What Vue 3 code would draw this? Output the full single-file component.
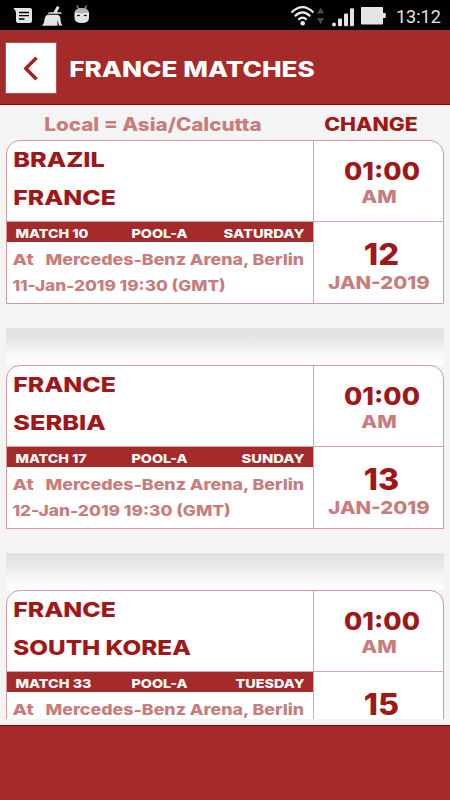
<template>
  <div class="app">
    <!-- Status Bar -->
    <div class="status-bar">
      <svg class="status-left" viewBox="0 0 80 30" width="80" height="30">
        <g fill="#e4e4e4">
          <path d="M0.500 8H17Q19 8 19 10V21Q19 23 17 23H5Q3 23 3 21V12Z" />
          <path d="M29 25.700Q31.500 23 31.500 19.500Q32 15.500 35 14.800H44.500Q48 16 47.500 20Q47.500 23 49.500 25.500H46L44.500 20V25.700Z" />
          <path d="M34.500 13.800Q35 12.200 37 12.200H40.500L44 6L46.500 7.200L44 12.200H47.500Q49 12.500 48.800 13.800Z" />
          <path d="M61.500 12H76V18Q76 23 68.700 23Q61.500 23 61.500 18Z" />
        </g>
        <path d="M6 12.500H16M6 15.700H16M6 19H11.500" stroke="#000" stroke-width="1.300" fill="none" />
        <path d="M64 5.500L66 9.500M73.500 5.500L71.500 9.500" stroke="#999" stroke-width="1.300" />
        <path d="M61.800 12.500Q62 8 68.700 8Q75.500 8 75.800 12.500Q69 14 61.800 12.500Z" fill="#b5b5b5" />
        <ellipse cx="65.500" cy="15.500" rx="1.500" ry="0.800" fill="#000" />
        <ellipse cx="72.300" cy="15.500" rx="1.500" ry="0.800" fill="#000" />
      </svg>
      <svg class="status-right" viewBox="0 0 98 30" width="98" height="30">
        <g fill="none" stroke="#ececec" stroke-width="2.200">
          <path d="M1.500 12.500Q12.500 1.800 23.500 12.500" />
          <path d="M4.800 16.200Q12.500 8.500 20.200 16.200" />
          <path d="M8.300 19.700Q12.500 15.500 16.700 19.700" />
        </g>
        <circle cx="12.700" cy="23.300" r="2.300" fill="#ececec" />
        <path d="M30.500 7.500L34 13.500H27ZM27 18H34L30.500 24Z" fill="#4c4c4c" />
        <g fill="#e4e4e4">
          <circle cx="44" cy="24.400" r="2" />
          <rect x="48" y="18.500" width="4" height="7.800" rx="1.200" />
          <rect x="54" y="13.500" width="4" height="12.800" rx="1.200" />
          <rect x="60" y="8.200" width="4" height="18" rx="1.200" />
          <rect x="71" y="7" width="22" height="17.500" rx="0.800" />
          <rect x="92" y="13" width="3.800" height="5" rx="1" />
        </g>
      </svg>
      <span class="clock">13:12</span>
    </div>

    <!-- Header -->
    <header class="header">
      <button class="back" type="button" aria-label="Back">
        <svg viewBox="0 0 50 50" width="50" height="50">
          <path d="M30.500 14.800L19.800 25.500L30.500 36.200" fill="none" stroke="#a52020" stroke-width="3.400" />
        </svg>
      </button>
      <FitText text="FRANCE MATCHES" :width="244" :cap="15.5" />
    </header>

    <!-- Timezone -->
    <div class="timezone">
      <FitText class="muted" text="Local = Asia/Calcutta" :width="216" :cap="13.2" />
      <FitText text="CHANGE" :width="92" :cap="13.2" />
    </div>

    <!-- Matches -->
    <main class="matches">
      <section v-for="match in matches" :key="match.id" class="match">
        <div class="card">
          <div class="details">
            <div class="teams">
              <FitText :text="match.home[0]" :width="match.home[1]" :cap="15" />
              <FitText :text="match.away[0]" :width="match.away[1]" :cap="15" />
            </div>
            <div class="match-bar">
              <FitText :text="'MATCH ' + match.id" :width="match.idWidth" :cap="9" />
              <FitText text="POOL-A" :width="55" :cap="9" />
              <FitText :text="match.day[0]" :width="match.day[1]" :cap="9" />
            </div>
            <div class="venue muted">
              <div class="place">
                <FitText text="At" :width="20" :cap="11" />
                <FitText text="Mercedes-Benz Arena, Berlin" :width="257.5" :cap="11" />
              </div>
              <FitText :text="match.gmt[0]" :width="match.gmt[1]" :cap="11" />
            </div>
          </div>
          <div class="local">
            <div class="time">
              <FitText class="hour" text="01:00" :width="74" :cap="17.5" />
              <FitText class="muted" text="AM" :width="34" :cap="13" />
            </div>
            <div class="date">
              <FitText class="date-day" :text="match.date" :width="33" :cap="21.5" />
              <FitText class="muted" text="JAN-2019" :width="100" :cap="13" />
            </div>
          </div>
        </div>
        <div class="separator"></div>
      </section>
    </main>

    <footer class="footer"></footer>
  </div>
</template>

<script setup>
import { h } from 'vue'

// Wide display lettering: text stretched to a width, box as tall as its capitals
const FitText = (props) => {
  const size = props.cap / 0.727
  const bearing = size * 0.04
  return h('svg', { width: props.width, height: props.cap, class: 'fit' }, [
    h('text', {
      x: -bearing,
      y: props.cap,
      'font-size': size,
      textLength: props.width + bearing * 2,
      lengthAdjust: 'spacingAndGlyphs'
    }, props.text)
  ])
}
FitText.props = ['text', 'width', 'cap']

const matches = [
  {
    id: 10,
    idWidth: 72,
    home: ['BRAZIL', 90],
    away: ['FRANCE', 101],
    day: ['SATURDAY', 80],
    gmt: ['11-Jan-2019 19:30 (GMT)', 212],
    date: '12'
  },
  {
    id: 17,
    idWidth: 70,
    home: ['FRANCE', 101],
    away: ['SERBIA', 91],
    day: ['SUNDAY', 62],
    gmt: ['12-Jan-2019 19:30 (GMT)', 217],
    date: '13'
  },
  {
    id: 33,
    idWidth: 75,
    home: ['FRANCE', 101],
    away: ['SOUTH KOREA', 176],
    day: ['TUESDAY', 68],
    gmt: ['14-Jan-2019 19:30 (GMT)', 217],
    date: '15'
  }
]
</script>

<style>
body {
  margin: 0;
}
</style>

<style scoped>
.app {
  width: 450px;
  height: 800px;
  display: flex;
  flex-direction: column;
  overflow: hidden;
  background: #f4f4f4;
  color: #a01717;
  font-family: Inter, 'Liberation Sans', sans-serif;
  font-weight: 800;
}

.fit {
  display: block;
  flex-shrink: 0;
  overflow: visible;
  fill: currentColor;
}

.muted {
  color: #c87d7d;
}

.status-bar {
  height: 30px;
  flex-shrink: 0;
  display: flex;
  align-items: center;
  background: #000;
  color: #e4e4e4;
}

.status-left {
  margin-left: 13px;
}

.status-right {
  margin-left: 197px;
}

.clock {
  margin: 3px 0 0 8px;
  font: 400 18px/30px Roboto, sans-serif;
}

.header {
  box-sizing: border-box;
  height: 75px;
  flex-shrink: 0;
  display: flex;
  align-items: center;
  gap: 13.5px;
  padding: 0 6px;
  background: #a52a2a;
  border-bottom: 1px solid #990000;
  color: #fff;
}

.header .fit {
  margin-top: 3px;
}

.back {
  width: 50px;
  height: 50px;
  margin-top: 1px;
  padding: 0;
  border: 0;
  background: #fff;
  outline: 1px solid #bd4d4d;
  outline-offset: -0.5px;
}

.back svg {
  display: block;
}

.timezone {
  box-sizing: border-box;
  height: 35px;
  flex-shrink: 0;
  display: flex;
  gap: 64.5px;
  padding: 12.5px 0 0 44.5px;
}

.matches {
  height: 579px;
  flex-shrink: 0;
  padding: 0 6px;
  overflow: hidden;
}

.card {
  box-sizing: border-box;
  height: 164px;
  display: flex;
  overflow: hidden;
  background: #fff;
  border: 1px solid #d69a9a;
  border-radius: 14px 14px 0 0;
}

.details {
  box-sizing: border-box;
  width: 307px;
  border-right: 1px solid #dba5a5;
}

.teams {
  box-sizing: border-box;
  height: 81px;
  display: flex;
  flex-direction: column;
  gap: 22.5px;
  padding: 11px 0 0 6.5px;
  border-bottom: 1px solid #dba5a5;
}

.match-bar {
  box-sizing: border-box;
  height: 20px;
  display: grid;
  grid-template-columns: 116.5px 1fr auto;
  padding: 6.5px 9px 0 8.5px;
  background: #a52a2a;
  color: #fff;
}

.venue {
  display: flex;
  flex-direction: column;
  gap: 15px;
  padding: 12px 0 0 6px;
}

.place {
  display: flex;
  gap: 13px;
}

.local {
  flex: 1;
}

.time,
.date {
  box-sizing: border-box;
  display: flex;
  flex-direction: column;
  align-items: center;
}

.time {
  height: 81px;
  gap: 10.5px;
  padding-top: 21px;
  border-bottom: 1px solid #dba5a5;
}

.hour {
  margin-left: 7px;
}

.date {
  gap: 11.5px;
  padding-top: 21px;
}

.date-day {
  margin-left: 5px;
}

.separator {
  height: 37px;
  margin-top: 24px;
  background: linear-gradient(#e2e2e2, #e6e6e6 30%, #f6f6f6 65%, #fff);
}

.footer {
  box-sizing: border-box;
  height: 75px;
  margin-top: auto;
  background: #a52a2a;
  border-top: 1px solid #990000;
}
</style>
